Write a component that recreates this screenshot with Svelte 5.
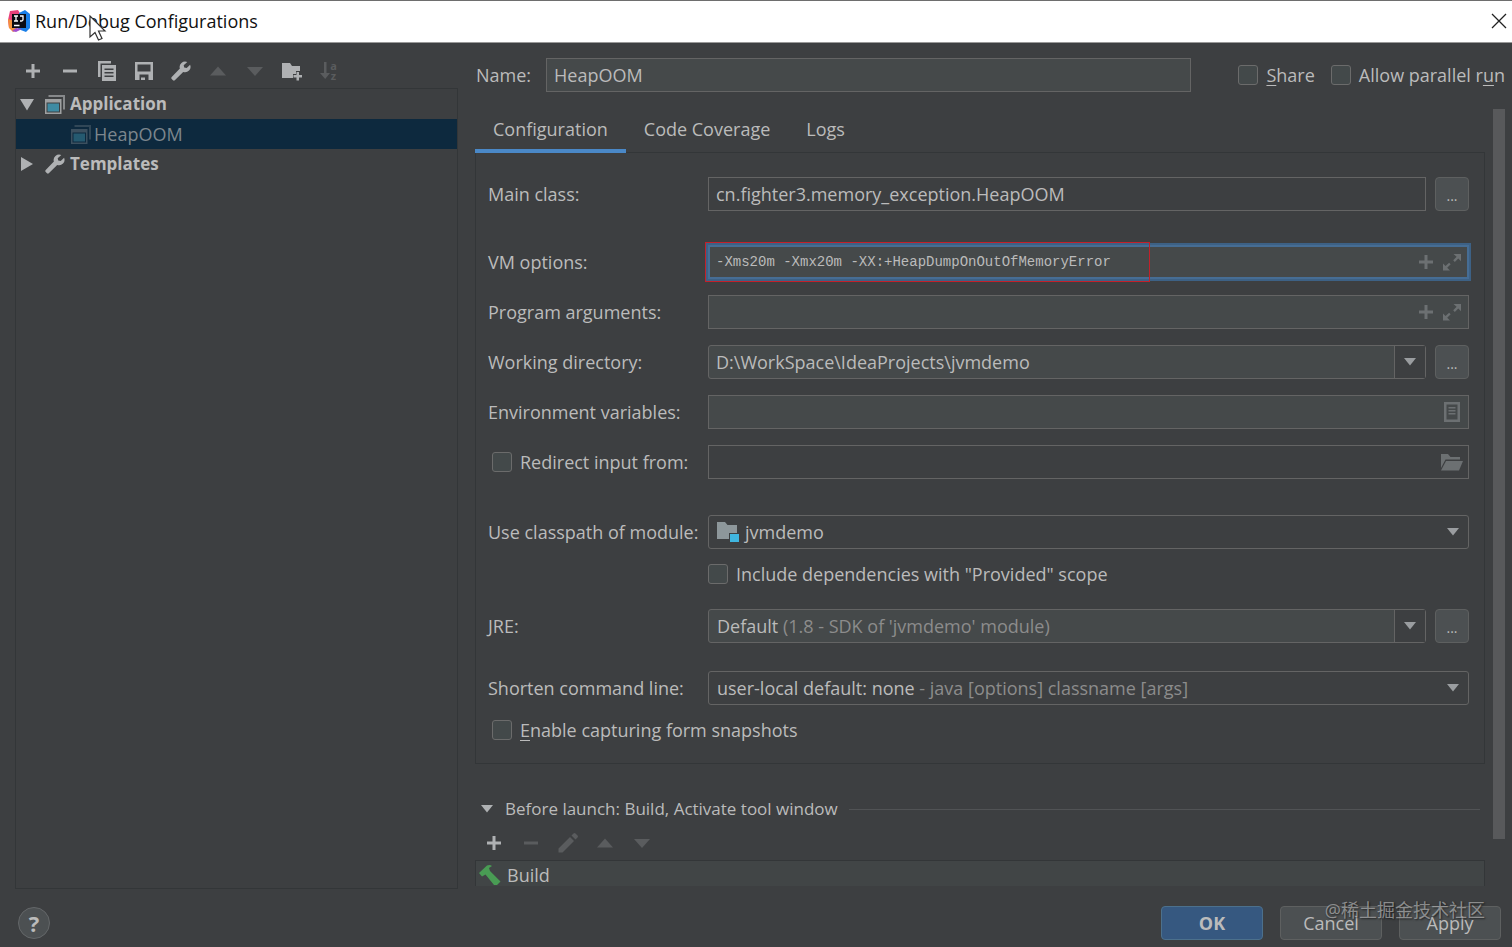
<script>
  let name = $state('HeapOOM');
  let share = $state(false);
  let parallel = $state(false);
  let activeTab = $state('Configuration');

  let mainClass = $state('cn.fighter3.memory_exception.HeapOOM');
  let vmOptions = $state('-Xms20m -Xmx20m -XX:+HeapDumpOnOutOfMemoryError');
  let programArgs = $state('');
  let workingDir = $state('D:\\WorkSpace\\IdeaProjects\\jvmdemo');
  let envVars = $state('');
  let redirect = $state(false);
  let redirectFile = $state('');
  let includeProvided = $state(false);
  let snapshots = $state(false);

  const tabs = ['Configuration', 'Code Coverage', 'Logs'];
</script>

{#snippet plus()}
  <svg width="16" height="16" viewBox="0 0 16 16"><path d="M6.500 1h3v5.500H15v3H9.500V15h-3V9.500H1v-3h5.500z" fill="currentColor" /></svg>
{/snippet}

{#snippet minus()}
  <svg width="16" height="16" viewBox="0 0 16 16"><path d="M1 6.500h14v3H1z" fill="currentColor" /></svg>
{/snippet}

{#snippet up()}
  <svg width="18" height="18" viewBox="0 0 18 18"><path d="M1 13.500L9 4.500l8 9z" fill="currentColor" /></svg>
{/snippet}

{#snippet down()}
  <svg width="18" height="18" viewBox="0 0 18 18"><path d="M1 5h16l-8 9z" fill="currentColor" /></svg>
{/snippet}

{#snippet arrow()}
  <svg width="14" height="8" viewBox="0 0 14 8"><path d="M1 0h12L7 7.500z" fill="currentColor" /></svg>
{/snippet}

{#snippet wrench()}
  <svg width="20" height="20" viewBox="0 0 20 20">
    <path d="M16.300.900A5.500 5.500 0 0 0 8.900 7.600L.7 16.100a1.300 1.300 0 0 0 0 1.800l1.300 1.300a1.300 1.300 0 0 0 1.800 0l8.400-8.200a5.500 5.500 0 0 0 6.900-7.300l-3.400 3.400-2.500-.5-.5-2.400z" fill="currentColor" />
  </svg>
{/snippet}

{#snippet appIcon()}
  <svg width="20" height="19" viewBox="0 0 20 19">
    <path d="M3.500 0H20v14.500h-2V2H3.500z" fill="currentColor" opacity="0.65" />
    <path d="M0 4h16.500v15H0zM1.500 7.500v10H15v-10z" fill="currentColor" opacity="0.85" fill-rule="evenodd" />
    <path d="M2.500 8.500H14v8H2.500z" fill="#3e8ba3" />
  </svg>
{/snippet}

{#snippet expand()}
  <svg width="18" height="17" viewBox="0 0 18 17" fill="currentColor">
    <path d="M10.500 0H18v7.200l-2.700-2.700-3.500 3.400-1.600-1.600 3.400-3.500zM0 9.500l2.500 2.600 3.600-3.400 1.600 1.500-3.500 3.600L7 16.500H0z" />
  </svg>
{/snippet}

<div class="dialog">
  <header class="titlebar">
    <svg class="logo" width="22" height="22" viewBox="0 0 22 22">
      <path d="M2 1l8-1 3 5-5 14-7-1-1-8z" fill="#e8407a" />
      <path d="M0 9l6 2 4 9-5 2-4-4z" fill="#f4913c" />
      <path d="M11 3l6-3 5 4v14l-4 4-8-3z" fill="#1a7fe8" />
      <path d="M8 18l6 1-6 3-4-1z" fill="#a14fd0" />
      <path d="M4 4h14v14H4z" fill="#0b0b12" />
      <path d="M6 6h4M8 6v5M6 11h4M12 6h3v3.500q0 1.500-1.500 1.500H12M6 15.500h5.500" fill="none" stroke="#fff" stroke-width="1.300" />
    </svg>
    <h1>Run/Debug Configurations</h1>
    <button class="close" aria-label="Close">
      <svg width="16" height="16" viewBox="0 0 16 16"><path d="M1 1l14 14M15 1L1 15" stroke="#222" stroke-width="1.300" /></svg>
    </button>
    <svg class="cursor" width="18" height="26" viewBox="0 0 18 26">
      <path d="M1 1v21l5-4.500 3.500 7.500 3.500-1.500-3.500-7.500H16z" fill="#fff" stroke="#333" stroke-width="1.200" />
    </svg>
  </header>

  <div class="body">
    <aside class="sidebar">
      <div class="toolbar">
        <button aria-label="Add">{@render plus()}</button>
        <button aria-label="Remove">{@render minus()}</button>
        <button aria-label="Copy">
          <svg width="20" height="20" viewBox="0 0 20 20" fill="currentColor">
            <path d="M1 0h13v2.500H3.500V16H1z" />
            <path fill-rule="evenodd" d="M5 4h14v16H5zM7.500 7.500V9h9V7.500zm0 3.500v1.500h9V11zm0 3.500V16h9v-1.500z" />
          </svg>
        </button>
        <button aria-label="Save">
          <svg width="18" height="18" viewBox="0 0 18 18" fill="currentColor">
            <path fill-rule="evenodd" d="M0 0h18v18H0zM2.500 2.500v7h13v-7zM4.500 12.500V18h1.500v-2.500h4V18h3.500v-5.500z" />
          </svg>
        </button>
        <button aria-label="Edit templates">{@render wrench()}</button>
        <button aria-label="Move up" disabled>{@render up()}</button>
        <button aria-label="Move down" disabled>{@render down()}</button>
        <button aria-label="New folder">
          <svg width="22" height="20" viewBox="0 0 22 20" fill="currentColor">
            <path d="M1 2h8l2 3h8v5h-4v3h-3v4H1z" />
            <path d="M15.500 11h2.500v3h3v2.500h-3v3h-2.500v-3h-3V14h3z" />
          </svg>
        </button>
        <button class="sort" aria-label="Sort" disabled>
          <svg width="10" height="18" viewBox="0 0 10 18"><path d="M4 0h2.500v11H10l-4.800 6L0 11h4z" fill="currentColor" /></svg>
          <span><b>a</b><b>z</b></span>
        </button>
      </div>

      <ul class="tree">
        <li class="row">
          <svg class="twisty" width="14" height="13" viewBox="0 0 14 13"><path d="M0 1h14L7 12.500z" fill="currentColor" /></svg>
          {@render appIcon()}
          <strong>Application</strong>
        </li>
        <li class="row child selected">
          {@render appIcon()}
          <span>HeapOOM</span>
        </li>
        <li class="row">
          <svg class="twisty" width="14" height="14" viewBox="0 0 14 14"><path d="M1 0v14l12-7z" fill="currentColor" /></svg>
          {@render wrench()}
          <strong>Templates</strong>
        </li>
      </ul>
    </aside>

    <main class="editor">
      <div class="name-row">
        <label for="name">Name:</label>
        <input id="name" class="field" type="text" bind:value={name} />
        <div class="name-options">
          <label class="check"><input type="checkbox" bind:checked={share} /><span><u>S</u>hare</span></label>
          <label class="check"><input type="checkbox" bind:checked={parallel} /><span>Allow parallel r<u>u</u>n</span></label>
        </div>
      </div>

      <div class="scroll">
        <div class="content">
          <div class="tabs" role="tablist">
            {#each tabs as tab}
              <button role="tab" aria-selected={tab === activeTab} class:active={tab === activeTab} onclick={() => (activeTab = tab)}>{tab}</button>
            {/each}
          </div>

          <div class="panel">
            <div class="group main-class">
              <div class="form-row">
                <label for="main-class">Main class:</label>
                <input id="main-class" class="field plain" type="text" bind:value={mainClass} />
                <button class="more" aria-label="Browse main class">...</button>
              </div>
            </div>

            <div class="group options">
              <div class="form-row">
                <label for="vm">VM options:</label>
                <div class="field focused">
                  <input id="vm" class="mono" type="text" spellcheck="false" bind:value={vmOptions} />
                  <button aria-label="Insert macro">{@render plus()}</button>
                  <button aria-label="Expand">{@render expand()}</button>
                  <div class="highlight"></div>
                </div>
              </div>
              <div class="form-row">
                <label for="args">Program arguments:</label>
                <div class="field">
                  <input id="args" class="mono" type="text" bind:value={programArgs} />
                  <button aria-label="Insert macro">{@render plus()}</button>
                  <button aria-label="Expand">{@render expand()}</button>
                </div>
              </div>
              <div class="form-row">
                <label for="dir">Working directory:</label>
                <div class="field rounded">
                  <input id="dir" type="text" bind:value={workingDir} />
                  <button class="drop" aria-label="Recent directories">{@render arrow()}</button>
                </div>
                <button class="more" aria-label="Browse directory">...</button>
              </div>
              <div class="form-row">
                <label for="env">Environment variables:</label>
                <div class="field">
                  <input id="env" type="text" bind:value={envVars} />
                  <button aria-label="Edit variables">
                    <svg width="16" height="20" viewBox="0 0 16 20" fill="currentColor">
                      <path fill-rule="evenodd" d="M0 0h16v20H0zM2.500 2.500v15h11v-15z" />
                      <path d="M4.500 5h7v1.500h-7zM4.500 8h7v1.500h-7zM4.500 11h7v1.500h-7z" />
                    </svg>
                  </button>
                </div>
              </div>
              <div class="form-row">
                <label class="check inset"><input type="checkbox" bind:checked={redirect} /><span>Redirect input from:</span></label>
                <div class="field plain">
                  <input type="text" aria-label="Input file" bind:value={redirectFile} />
                  <button aria-label="Open file">
                    <svg width="22" height="17" viewBox="0 0 22 17" fill="currentColor">
                      <path d="M0 0h7l2.500 3H19v2.500H4.500L0 14z" />
                      <path d="M5 7h17l-4 9.500H0z" />
                    </svg>
                  </button>
                </div>
              </div>
            </div>

            <div class="group module">
              <div class="form-row">
                <label for="module">Use classpath of module:</label>
                <div class="field plain rounded combo">
                  <svg width="22" height="20" viewBox="0 0 22 20">
                    <path d="M0 0h8l2.500 3H20v8h-8v6H0z" fill="#8d979b" />
                    <path d="M13 12h9v8h-9z" fill="#40b6e0" />
                  </svg>
                  <span>jvmdemo</span>
                  {@render arrow()}
                  <select id="module"><option>jvmdemo</option></select>
                </div>
              </div>
              <div class="form-row indent">
                <label class="check"><input type="checkbox" bind:checked={includeProvided} /><span>Include dependencies with "Provided" scope</span></label>
              </div>
            </div>

            <div class="group jre">
              <div class="form-row">
                <label for="jre">JRE:</label>
                <div class="field rounded combo">
                  <span>Default <i>(1.8 - SDK of 'jvmdemo' module)</i></span>
                  <div class="drop">{@render arrow()}</div>
                  <select id="jre"><option>Default</option></select>
                </div>
                <button class="more" aria-label="Browse JRE">...</button>
              </div>
            </div>

            <div class="group shorten">
              <div class="form-row">
                <label for="shorten">Shorten command line:</label>
                <div class="field plain rounded combo">
                  <span>user-local default: none <i>- java [options] classname [args]</i></span>
                  {@render arrow()}
                  <select id="shorten"><option>user-local default: none</option></select>
                </div>
              </div>
              <div class="form-row">
                <label class="check inset wide"><input type="checkbox" bind:checked={snapshots} /><span><u>E</u>nable capturing form snapshots</span></label>
              </div>
            </div>
          </div>

          <section class="before">
            <button class="before-title">{@render arrow()}<span>Before launch: Build, Activate tool window</span></button>
            <div class="toolbar">
              <button aria-label="Add task">{@render plus()}</button>
              <button aria-label="Remove task" disabled>{@render minus()}</button>
              <button aria-label="Edit task" disabled>
                <svg width="20" height="20" viewBox="0 0 20 20" fill="currentColor"><path d="M12 4l4 4L4.500 19.500H.5v-4zM13.500 2.500L15.500.500a1.500 1.500 0 0 1 2 0l2 2a1.500 1.500 0 0 1 0 2l-2 2z" /></svg>
              </button>
              <button aria-label="Task up" disabled>{@render up()}</button>
              <button aria-label="Task down" disabled>{@render down()}</button>
            </div>
            <div class="tasks">
              <svg width="22" height="20" viewBox="0 0 22 20">
                <path d="M0 8L8 .500q3-1 5 .500l-3 2 1 3L21.500 16.500 18 20l-3 0L6.500 9.500 3 11.500z" fill="#499c54" />
              </svg>
              <span>Build</span>
            </div>
          </section>
        </div>
        <div class="scrollbar"><div class="thumb"></div></div>
      </div>
    </main>
  </div>

  <footer class="footer">
    <button class="help" aria-label="Help">?</button>
    <div class="actions">
      <button class="primary">OK</button>
      <button>Cancel</button>
      <button>Apply</button>
    </div>
    <span class="watermark">@稀土掘金技术社区</span>
  </footer>
</div>

<style>
  :global(body) {
    margin: 0;
    background: #3c3f41;
  }

  .dialog {
    display: flex;
    flex-direction: column;
    min-height: 100vh;
    background: #3d3f41;
    color: #bbbbbb;
    font-family: 'Open Sans', 'Noto Sans', 'Noto Sans CJK SC', sans-serif;
    font-size: 18px;
    line-height: 24px;
  }

  .dialog * {
    box-sizing: border-box;
  }

  button,
  input,
  select {
    font: inherit;
    color: inherit;
    margin: 0;
    padding: 0;
    border: none;
    background: none;
    outline: none;
  }

  button {
    display: flex;
    align-items: center;
    justify-content: center;
  }

  svg {
    flex: none;
    display: block;
  }

  i {
    font-style: normal;
    color: #8c8c8c;
  }

  .titlebar {
    position: relative;
    display: flex;
    align-items: center;
    gap: 5px;
    height: 43px;
    padding: 0 5px 2px 8px;
    background: #fff;
    border-top: 1px solid #6e6e6e;
    border-bottom: 1px solid #999;
  }

  h1 {
    flex: 1;
    margin: 0;
    font-size: 18px;
    font-weight: 400;
    color: #111;
  }

  .cursor {
    position: absolute;
    left: 89px;
    top: 14px;
  }

  .body {
    display: flex;
    flex: 1;
    gap: 17px;
    padding-left: 15px;
  }

  .sidebar {
    display: flex;
    flex-direction: column;
    width: 443px;
    flex: none;
  }

  .toolbar {
    display: flex;
    align-items: center;
  }

  .toolbar button {
    width: 37px;
    height: 34px;
    color: #afb1b3;
  }

  .toolbar button:disabled {
    color: #5a5c5e;
  }

  .sidebar .toolbar {
    height: 45px;
    margin-left: -1px;
    padding-top: 11px;
  }

  .sort span {
    display: flex;
    flex-direction: column;
    font-size: 11px;
    line-height: 10px;
  }

  .tree {
    flex: 1;
    margin: 0;
    padding: 0;
    list-style: none;
    border: 1px solid #333638;
  }

  .row {
    display: flex;
    align-items: center;
    gap: 5px;
    height: 30px;
    padding-left: 4px;
    color: #afb1b3;
  }

  .row strong {
    font-size: 17px;
    color: #bbb;
  }

  .twisty {
    margin-right: 6px;
  }

  .child {
    gap: 3px;
    padding-left: 55px;
    color: #7c868d;
  }

  .child svg {
    opacity: 0.5;
  }

  .selected {
    background: #0d293e;
  }

  .editor {
    display: flex;
    flex-direction: column;
    flex: 1;
    min-width: 0;
  }

  .name-row {
    display: flex;
    align-items: center;
    height: 66px;
    padding: 0 7px 2px 0;
  }

  .name-row > label {
    width: 71px;
    padding-left: 1px;
  }

  .name-options {
    display: flex;
    gap: 16px;
    margin-left: 47px;
  }

  .check {
    display: flex;
    align-items: center;
    gap: 8px;
    white-space: nowrap;
  }

  .check input {
    appearance: none;
    flex: none;
    width: 20px;
    height: 20px;
    background: #43494a;
    border: 1px solid #6b6b6b;
    border-radius: 3px;
  }

  .check input:checked {
    background: #4b6eaf;
  }

  u {
    text-underline-offset: 3px;
  }

  .scroll {
    display: flex;
    flex: 1;
    gap: 8px;
    padding-right: 7px;
  }

  .content {
    flex: 1;
    min-width: 0;
  }

  .scrollbar {
    width: 12px;
    padding-bottom: 50px;
  }

  .thumb {
    height: 100%;
    background: #58595b;
  }

  .tabs {
    display: flex;
    height: 44px;
    border-bottom: 1px solid #333638;
  }

  .tabs button {
    height: 44px;
    padding: 0 18px;
    border-bottom: 4px solid transparent;
  }

  .tabs .active {
    border-bottom-color: #4a88c7;
  }

  .panel {
    padding: 24px 15px 16px 12px;
    border: 1px solid #333638;
    border-top: none;
  }

  .group {
    display: flex;
    flex-direction: column;
    gap: 8px;
  }

  .options {
    gap: 16px;
    margin-top: 34px;
  }

  .module {
    margin-top: 36px;
  }

  .jre {
    margin-top: 18px;
  }

  .shorten {
    margin-top: 28px;
  }

  .form-row {
    display: flex;
    align-items: center;
    height: 34px;
  }

  .form-row > label {
    flex: none;
    width: 220px;
  }

  .form-row > .inset {
    padding-left: 4px;
  }

  .form-row > .wide {
    width: auto;
  }

  .indent {
    padding-left: 220px;
  }

  .field {
    position: relative;
    display: flex;
    align-items: center;
    flex: 1;
    min-width: 0;
    height: 34px;
    padding-left: 7px;
    background: #45494a;
    border: 1px solid #646464;
  }

  .field input {
    flex: 1;
    min-width: 0;
    height: 100%;
  }

  .field > button:not(.drop) {
    width: 26px;
    height: 100%;
    color: #6c7072;
  }

  .field > button:last-of-type:not(.drop) {
    margin-right: 3px;
  }

  .plain {
    background: #3d3f41;
  }

  .rounded {
    border-radius: 3px;
  }

  .focused {
    border-color: #466d94;
    box-shadow: 0 0 0 2px #3d6185, inset 0 0 0 1px #466d94;
  }

  .field .mono {
    font-family: 'Liberation Mono', monospace;
    font-size: 14px;
  }

  /* marks the heap dump flags */
  .highlight {
    position: absolute;
    z-index: 1;
    left: -4px;
    top: -4px;
    bottom: -4px;
    width: 445px;
    border: 1px solid #c3202a;
    pointer-events: none;
  }

  .combo {
    padding-left: 8px;
    gap: 6px;
  }

  .combo > span {
    flex: 1;
    white-space: nowrap;
  }

  .combo > svg:not(:first-child) {
    margin-right: 8px;
  }

  .combo select {
    position: absolute;
    inset: 0;
    width: 100%;
    opacity: 0;
  }

  .combo,
  .drop {
    color: #bbb;
  }

  .combo svg,
  .drop svg {
    color: #9a9da0;
  }

  .drop {
    display: flex;
    align-items: center;
    justify-content: center;
    width: 31px;
    height: 100%;
    background: #3d3f41;
    border-left: 1px solid #646464;
  }

  .more {
    width: 34px;
    height: 34px;
    margin-left: 9px;
    padding-top: 3px;
    background: #4c5052;
    border: 1px solid #5e6060;
    border-radius: 4px;
    font-size: 14px;
  }

  .before {
    padding-top: 32px;
  }

  .before-title {
    width: 100%;
    gap: 11px;
    padding: 0 5px;
    height: 26px;
    font-size: 17px;
  }

  .before-title::after {
    content: '';
    flex: 1;
    height: 1px;
    background: #515355;
  }

  .before-title svg {
    color: #afb1b3;
  }

  .before .toolbar {
    height: 38px;
    padding-top: 4px;
  }

  .tasks {
    display: flex;
    align-items: center;
    gap: 6px;
    height: 26px;
    padding: 3px 3px 0;
    background: #414546;
    border: 1px solid #333638;
    border-bottom: none;
  }

  .footer {
    position: relative;
    display: flex;
    align-items: center;
    justify-content: space-between;
    height: 58px;
    padding: 10px 11px 0 18px;
  }

  .help {
    width: 32px;
    height: 32px;
    border: 1px solid #646769;
    border-radius: 50%;
    background: #4c5052;
    font-size: 22px;
    font-weight: 700;
  }

  .actions {
    display: flex;
    gap: 17px;
  }

  .actions button {
    width: 102px;
    height: 34px;
    background: #4c5052;
    border: 1px solid #5e6060;
    border-radius: 4px;
  }

  .actions .primary {
    background: #365880;
    border-color: #4c708c;
    font-weight: 700;
  }

  .watermark {
    position: absolute;
    right: 27px;
    top: 9px;
    color: rgba(200, 200, 200, 0.6);
    text-shadow: 1px 1px 2px rgba(0, 0, 0, 0.6);
    pointer-events: none;
  }
</style>
